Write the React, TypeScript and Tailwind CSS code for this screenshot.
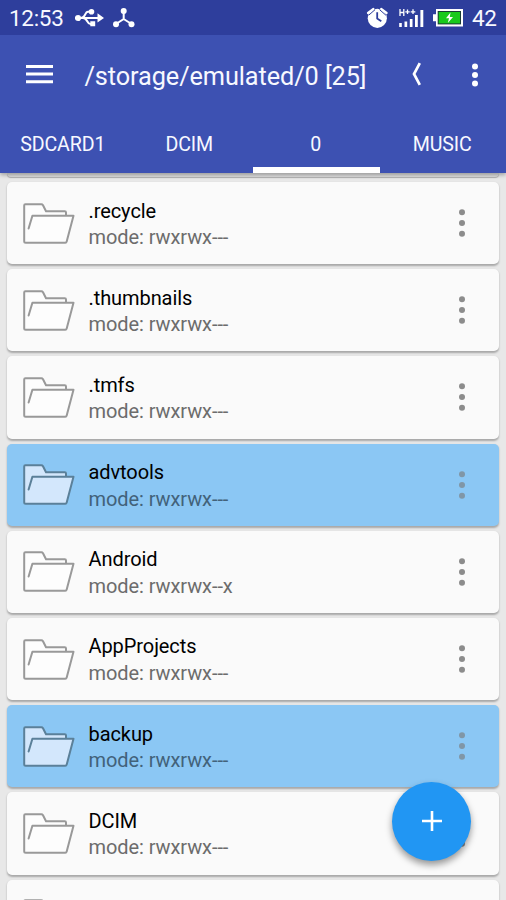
import React from "react";

type Entry = { name: string; mode: string; selected?: boolean };

const entries: Entry[] = [
  { name: ".recycle", mode: "rwxrwx---" },
  { name: ".thumbnails", mode: "rwxrwx---" },
  { name: ".tmfs", mode: "rwxrwx---" },
  { name: "advtools", mode: "rwxrwx---", selected: true },
  { name: "Android", mode: "rwxrwx--x" },
  { name: "AppProjects", mode: "rwxrwx---" },
  { name: "backup", mode: "rwxrwx---", selected: true },
  { name: "DCIM", mode: "rwxrwx---" },
];

const tabs = ["SDCARD1", "DCIM", "0", "MUSIC"];

function Folder({ selected }: { selected?: boolean }) {
  return (
    <svg
      width="54"
      height="44"
      viewBox="0 0 54 44"
      fill={selected ? "#d3e7fc" : "#fdfdfd"}
      stroke={selected ? "#5b8099" : "#999"}
      strokeWidth="2"
      strokeLinejoin="round"
      strokeLinecap="round"
      className="mt-[1px] shrink-0"
    >
      <path d="M2.2 40V3.2Q2.2 2.2 3.2 2.2H19.3Q20.4 2.2 21 3.2L24 9.3H42.8Q44 9.3 44 10.5V14L45 40H3.5Q2.2 40 2.2 38.8Z" stroke="none" />
      <path d="M6.6 26.5L10.4 13.8H51.5L44.7 39.6Q44.4 40.7 43.3 40.7H3.7Q2.2 40.7 2.2 39.2V3.4Q2.2 2.2 3.4 2.2H19.3Q20.4 2.2 21 3.2L24 9.3H42.8Q44 9.3 44 10.5V13.6" />
    </svg>
  );
}

function Dots({ className, r, pitch }: { className: string; r: number; pitch: number }) {
  return (
    <svg width="8" height="34" viewBox="0 0 8 34" fill="currentColor" className={className}>
      <circle cx="4" cy={17 - pitch} r={r} />
      <circle cx="4" cy="17" r={r} />
      <circle cx="4" cy={17 + pitch} r={r} />
    </svg>
  );
}

function Row({ entry }: { entry: Entry }) {
  return (
    <li
      className={`flex h-[82.2px] shrink-0 items-center rounded-[5px] pl-[15px] pr-[33px] shadow-[0_1.5px_2px_rgba(0,0,0,0.28)] ${
        entry.selected ? "bg-[#8bc7f4]" : "bg-[#fafafa]"
      }`}
    >
      <Folder selected={entry.selected} />
      <div className="ml-[12.5px] flex-1 pt-[2px] text-[20px] leading-[26.6px] tracking-[-0.08px]">
        <div className="text-black">{entry.name}</div>
        <div className={entry.selected ? "text-[#42627a]" : "text-[#6c6c6c]"}>mode: {entry.mode}</div>
      </div>
      <Dots r={3} pitch={10.7} className={entry.selected ? "text-[#8096a6]" : "text-[#8c8c8c]"} />
    </li>
  );
}

function StatusBar() {
  return (
    <div className="flex h-[35px] items-center bg-[#2e3e9c] text-[22.5px] leading-[35px]">
      <span className="w-[75px] pl-[9px] pt-[2px] tracking-[-0.3px]">12:53</span>
      <svg width="30" height="22" viewBox="75 7 30 22" fill="none" stroke="#fff" strokeWidth="2">
        <path d="M78 18H99M81 18C86 18 84.5 11.7 88 11.7H91M83 18C88 18 86.5 24 90.5 24H93" />
        <circle cx="78" cy="18" r="3.1" fill="#fff" stroke="none" />
        <circle cx="91.5" cy="11.8" r="2.8" fill="#fff" stroke="none" />
        <path d="M97.5 13.3L104 18L97.5 22.5ZM90.3 21.3H95.2V26.3H90.3Z" fill="#fff" stroke="none" />
      </svg>
      <svg className="ml-[7px]" width="23" height="22" viewBox="112 7 23 22" fill="#fff">
        <path d="M123.7 11V19L116 24M123.7 19L131.5 24" fill="none" stroke="#fff" strokeWidth="2" />
        <circle cx="123.7" cy="11" r="3" />
        <circle cx="116" cy="24.2" r="3" />
        <circle cx="131.5" cy="24.2" r="3" />
      </svg>
      <svg className="ml-auto" width="24" height="24" viewBox="366 6 24 24" fill="#fff">
        <circle cx="377.3" cy="18.3" r="9.6" />
        <path d="M368 13L373.4 8.9M381.2 8.9L386.6 13" stroke="#fff" strokeWidth="2.2" strokeLinecap="round" />
        <path d="M368.6 15.3L375 9.7M386 15.3L379.6 9.7" stroke="#2e3e9c" strokeWidth="1" />
        <path d="M377.2 12.2V18.5L381.3 21.2" fill="none" stroke="#2e3e9c" strokeWidth="1.8" />
      </svg>
      <svg className="ml-[8px]" width="26" height="20" viewBox="398 7 26 20" fill="#fff">
        <path d="M399.2 22H401.8V26H399.2ZM404.5 20.5H407.2V26H404.5ZM409.8 18H412.5V26H409.8ZM415 14H417.8V26H415ZM420.4 9H423.3V26H420.4Z" />
        <path d="M400 8V15M403.8 8V15M400 11.5H403.8M405.3 10.8H409.7M407.5 8.6V13M410.7 10.8H415.3M413 8.3V13" stroke="#fff" strokeWidth="1.3" />
      </svg>
      <svg className="ml-[9px]" width="31" height="20" viewBox="433 8 31 20">
        <path d="M433 14.3H436V9H463V26.5H436V21.3H433Z" fill="#fff" />
        <path d="M437.7 11H461V24.4H437.7Z" fill="#193b35" />
        <path d="M438.7 12H460V23.4H438.7Z" fill="#18c91b" />
        <path d="M450.5 12.6L446 18.2H449L447.8 23L453 17H449.8Z" fill="#fff" />
      </svg>
      <span className="ml-[8px] w-[34px] pt-[2px] tracking-[-0.3px]">42</span>
    </div>
  );
}

export default function App() {
  return (
    <main className="relative flex h-[900px] w-[506px] flex-col overflow-hidden bg-[#e8e8e8] font-['Roboto',sans-serif]">
      <header className="relative z-10 shrink-0 bg-[#3d51b2] text-[#f7f8ff] shadow-[0_2px_4px_rgba(0,0,0,0.3)]">
        <StatusBar />
        <div className="flex h-[80px] items-center pl-[26px] pr-[27px]">
          <svg className="-mt-px" width="27" height="19" viewBox="0 0 27 19" fill="#fff">
            <path d="M0 0H27V3H0ZM0 7.6H27V10.6H0ZM0 15.2H27V18.2H0Z" />
          </svg>
          <h1 className="ml-[31.5px] flex-1 whitespace-nowrap pt-[3px] text-[25.3px] leading-[32px] tracking-[-0.09px]">/storage/emulated/0 [25]</h1>
          <svg className="-mt-[2px] mr-[49px]" width="12" height="24" viewBox="0 0 12 24" fill="none" stroke="#fff" strokeWidth="2.7">
            <path d="M9.8 1.2L4 12L9.8 22.8" />
          </svg>
          <Dots r={3} pitch={8.5} className="-mt-px shrink-0 text-white" />
        </div>
        <nav className="grid h-[58px] grid-cols-4 text-[19.6px] tracking-[-0.12px]">
          {tabs.map((tab) => (
            <div
              key={tab}
              className={`flex items-start justify-center pr-px pt-[16px] leading-[28px] ${tab === "0" ? "border-b-[6px] border-white" : ""}`}
            >
              {tab}
            </div>
          ))}
        </nav>
      </header>
      <ul className="flex flex-col gap-[5px] px-[7px]">
        <li className="h-1 shrink-0 rounded-b-[5px] bg-[#dcdcdc] shadow-[0_1px_1px_rgba(0,0,0,0.25)]" />
        {entries.map((entry) => (
          <Row key={entry.name} entry={entry} />
        ))}
        <li className="flex h-[82.2px] shrink-0 items-start rounded-[5px] bg-[#fafafa] pl-[15px] pt-[17px] shadow-[0_1.5px_2px_rgba(0,0,0,0.28)]">
          <Folder />
        </li>
      </ul>
      <button
        aria-label="Add"
        className="absolute left-[392px] top-[781.5px] z-20 flex size-[79px] items-center justify-center rounded-full bg-[#2196f3] shadow-[0_4px_7px_rgba(0,0,0,0.4)]"
      >
        <svg width="20" height="20" viewBox="0 0 20 20" stroke="#fff" strokeWidth="2.6">
          <path d="M10 0V20M0 10H20" />
        </svg>
      </button>
    </main>
  );
}
